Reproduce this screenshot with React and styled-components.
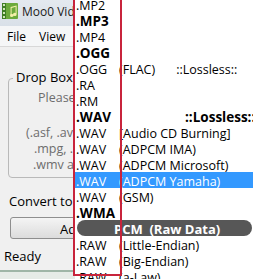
import React from 'react';
import styled, { createGlobalStyle } from 'styled-components';

const Global = createGlobalStyle`
  html, body { margin: 0; padding: 0; }
  body { width: 253px; height: 279px; overflow: hidden; background: #f0f0f0; }
`;

const Screen = styled.div`
  position: relative;
  width: 253px;
  height: 279px;
  overflow: hidden;
  font-family: "Open Sans", "Noto Sans", sans-serif;
  font-size: 12px;
  color: #000;
  background: #f0f0f0;
`;

const Window = styled.div`
  display: flex;
  flex-direction: column;
  height: 100%;
`;

const TitleBar = styled.div`
  height: 26px;
  display: flex;
  align-items: center;
  gap: 4px;
  padding: 0 0 4px 2px;
  box-sizing: border-box;
  background: linear-gradient(#e4e9ef, #d9e0e8);
  font-size: 12px;
  color: #1a1a1a;
`;

const MenuBar = styled.div`
  height: 20px;
  display: flex;
  align-items: center;
  gap: 13px;
  padding-left: 7px;
  background: #f5f6f7;
  border-bottom: 1px solid #d8d8d8;
`;

const Body = styled.div`
  flex: 1;
  display: flex;
  flex-direction: column;
  padding: 31px 0 0 8px;
`;

const GroupBox = styled.div`
  position: relative;
  height: 98px;
  width: 120px;
  border: 1px solid #b9b9b9;
  border-radius: 4px;
`;

const Legend = styled.span`
  position: absolute;
  top: -11px;
  left: 4px;
  padding: 0 3px;
  background: #f0f0f0;
  font-size: 13px;
`;

const HintBlock = styled.div`
  padding-top: 11px;
`;

const Hint = styled.div`
  color: #6d6d6d;
  padding-left: ${p => p.$indent}px;
  margin-top: ${p => p.$gap || 0}px;
  font-size: 12.5px;
  line-height: 16px;
  white-space: nowrap;
`;

const Label = styled.div`
  margin-top: 14px;
  padding-left: 1px;
  font-size: 13px;
`;

const Button = styled.div`
  margin: 7px 0 0 2px;
  height: 22px;
  width: 130px;
  border: 1px solid #8e8e8e;
  border-radius: 3px;
  background: linear-gradient(#f4f4f4, #dcdcdc);
  font-size: 13px;
  line-height: 22px;
  padding-left: 49px;
  box-sizing: border-box;
`;

const Status = styled.div`
  margin: 8px 0 0 -4px;
  font-size: 13px;
`;

const Strip = styled.div`
  margin-top: auto;
  height: 7px;
  border-top: 2px solid #9fb5a7;
  background: #e6ebe7;
`;

const List = styled.div`
  position: absolute;
  left: 75px;
  top: -4px;
  width: 178px;
  background: #fff;
`;

const Row = styled.div`
  height: 16px;
  box-sizing: border-box;
  padding: 2px 0 0 1px;
  display: flex;
  align-items: center;
  white-space: nowrap;
  font-weight: ${p => (p.$bold ? 700 : 400)};
  font-size: ${p => (p.$bold ? 13.5 : 12.5)}px;
  background: ${p => (p.$sel ? '#3399ff' : 'transparent')};
  color: ${p => (p.$sel ? '#fff' : '#000')};
`;

const Ext = styled.span`
  width: 43px;
  flex-shrink: 0;
`;

const Tag = styled.span`
  margin-left: ${p => p.$at}px;
`;

const Header = styled.div`
  height: 16px;
  box-sizing: border-box;
  padding: 1px 0 0 37px;
  margin: 0 1px 0 2px;
  border-radius: 8px;
  background: #575757;
  color: #fff;
  font-weight: 700;
  font-size: 13px;
  display: flex;
  align-items: center;
  white-space: pre;
`;

const Mark = styled.div`
  position: absolute;
  left: 73px;
  top: -4px;
  width: 49px;
  height: 280px;
  border: 2px solid #c8243c;
  box-sizing: border-box;
`;

const AppIcon = () => (
  <svg width="16" height="16" viewBox="0 0 16 16">
    <rect x="0" y="0" width="16" height="16" rx="1" fill="#6caa3c" />
    <rect x="0" y="0" width="4" height="16" fill="#3f7d25" />
    {[1, 5, 9, 13].map(y => (
      <rect key={y} x="1" y={y} width="2" height="2" fill="#cfe6b8" />
    ))}
    <path d="M8 12.5a1.8 1.6 0 1 0 1.6 -1.6V5l4 -1.2v6.2a1.8 1.6 0 1 0 1 1.4V2.4L8.6 4v6.2" fill="#f4f0a8" />
  </svg>
);

const items = [
  { ext: '.MP2' },
  { ext: '.MP3', bold: true },
  { ext: '.MP4' },
  { ext: '.OGG', bold: true },
  { ext: '.OGG', tag: '(FLAC)', extra: '::Lossless::', at: 21 },
  { ext: '.RA' },
  { ext: '.RM' },
  { ext: '.WAV', bold: true, extra: '::Lossless::', at: 66 },
  { ext: '.WAV', tag: '[Audio CD Burning]' },
  { ext: '.WAV', tag: '(ADPCM IMA)' },
  { ext: '.WAV', tag: '(ADPCM Microsoft)' },
  { ext: '.WAV', tag: '(ADPCM Yamaha)', sel: true },
  { ext: '.WAV', tag: '(GSM)' },
  { ext: '.WMA', bold: true },
  { header: 'PCM  (Raw Data)' },
  { ext: '.RAW', tag: '(Little-Endian)' },
  { ext: '.RAW', tag: '(Big-Endian)' },
  { ext: '.RAW', tag: '(a-Law)' },
];

export default function App() {
  return (
    <>
      <Global />
      <Screen>
        <Window>
          <TitleBar>
            <AppIcon />
            <span>Moo0 Video Converter</span>
          </TitleBar>
          <MenuBar>
            <span>File</span>
            <span>View</span>
          </MenuBar>
          <Body>
            <GroupBox>
              <Legend>Drop Box</Legend>
              <HintBlock>
                <Hint $indent={29}>Please drop files here</Hint>
                <Hint $indent={17} $gap={19}>(.asf, .avi, .flv,</Hint>
                <Hint $indent={25}>.mpg, .mp4,</Hint>
                <Hint $indent={24}>.wmv and more)</Hint>
              </HintBlock>
            </GroupBox>
            <Label>Convert to:</Label>
            <Button>Add</Button>
            <Status>Ready</Status>
          </Body>
          <Strip />
        </Window>
        <List>
          {items.map((it, i) =>
            it.header ? (
              <Header key={i}>{it.header}</Header>
            ) : (
              <Row key={i} $bold={it.bold} $sel={it.sel}>
                <Ext>{it.ext}</Ext>
                {it.tag && <span>{it.tag}</span>}
                {it.extra && <Tag $at={it.at}>{it.extra}</Tag>}
              </Row>
            )
          )}
        </List>
        <Mark />
      </Screen>
    </>
  );
}
